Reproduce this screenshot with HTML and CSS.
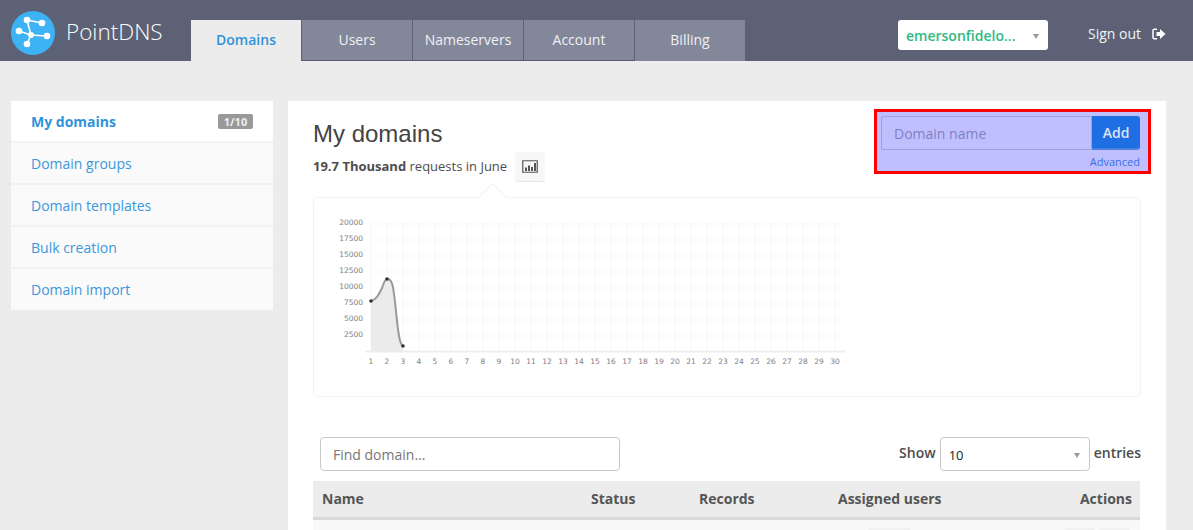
FILE: index.html
```html
<!DOCTYPE html>
<html>
  <head>
    <title>PointDNS</title>
    <meta charset="UTF-8">
    <link rel="stylesheet" href="styles.css">
  </head>
  <body>
    <header class="topbar">
      <a class="logo">
        <svg class="logo-mark" width="44" height="44" viewBox="11 11 44 44">
          <circle cx="33" cy="33" r="22" fill="#3db3f5"/>
          <g stroke="#fff" stroke-width="1.6" fill="none">
            <path d="M27 20 L42 23"/>
            <path d="M27 20 L31 35"/>
            <path d="M19 31 L31 35"/>
            <path d="M31 35 L47 36"/>
            <path d="M31 35 L27 44"/>
          </g>
          <g fill="#fff">
            <circle cx="27" cy="20" r="3.3"/>
            <circle cx="42" cy="23" r="3.3"/>
            <circle cx="19" cy="31" r="3.3"/>
            <circle cx="31" cy="35" r="3"/>
            <circle cx="47" cy="36" r="3.3"/>
            <circle cx="27" cy="44" r="3.3"/>
          </g>
        </svg>
        <span class="logo-text">PointDNS</span>
      </a>
      <nav class="tabs">
        <a class="tab active">Domains</a>
        <a class="tab">Users</a>
        <a class="tab">Nameservers</a>
        <a class="tab">Account</a>
        <a class="tab">Billing</a>
      </nav>
      <div class="account">
        <span class="account-name">emersonfidelo...</span>
        <span class="caret"></span>
      </div>
      <a class="signout">
        Sign out
        <svg width="14" height="12" viewBox="0 0 14 12">
          <path d="M5 1.2 H2.4 Q1 1.2 1 2.6 V9.4 Q1 10.8 2.4 10.8 H5" fill="none" stroke="#fff" stroke-width="1.5"/>
          <path d="M4.5 4 H8 V1 L13.5 6 L8 11 V8 H4.5 Z" fill="#fff"/>
        </svg>
      </a>
    </header>

    <div class="page">
      <aside class="sidebar">
        <a class="side-item current">My domains <span class="badge">1/10</span></a>
        <a class="side-item">Domain groups</a>
        <a class="side-item">Domain templates</a>
        <a class="side-item">Bulk creation</a>
        <a class="side-item">Domain import</a>
      </aside>

      <main class="content">
        <div class="content-head">
          <div>
            <h1>My domains</h1>
            <div class="usage">
              <span class="usage-text"><b>19.7 Thousand</b> requests in June</span>
              <a class="chart-btn">
                <svg width="16" height="13" viewBox="0 0 16 13">
                  <path d="M.75.75 H15.25 V12.25 H.75 Z" fill="none" stroke="#555" stroke-width="1.2"/>
                  <path d="M3 7.5 H5 V11 H3 Z M6 5.5 H8 V11 H6 Z M9 7 H11 V11 H9 Z M12 3 H14 V11 H12 Z" fill="#555"/>
                </svg>
              </a>
            </div>
          </div>
          <form class="add-form">
            <div class="add-row">
              <input class="add-input" placeholder="Domain name">
              <button class="add-btn" type="button">Add</button>
            </div>
            <a class="advanced">Advanced</a>
          </form>
        </div>

        <section class="chart-panel">
          <svg class="chart" width="560" height="170" viewBox="0 0 560 170">
            <defs>
              <pattern id="grid" x="56.5" y="9.5" width="16" height="16" patternUnits="userSpaceOnUse">
                <path d="M16 0 H0 V16" fill="none" stroke="#eeeeee" stroke-width="1"/>
              </pattern>
            </defs>
            <rect x="56" y="9" width="475" height="128" fill="url(#grid)"/>
            <path d="M51 137.5 H531" stroke="#eee" stroke-width="2"/>
            <path class="area" d="M57 87 C63 85 65 80 68 74 C70 68 72 65 73 65 C78 65 79 70 81 88 C84 116 85 130 89 132 L89 137 L57 137 Z"/>
            <path class="line" d="M57 87 C63 85 65 80 68 74 C70 68 72 65 73 65 C78 65 79 70 81 88 C84 116 85 130 89 132"/>
            <circle cx="57" cy="87" r="1.8"/>
            <circle cx="73" cy="65" r="1.8"/>
            <circle cx="89" cy="132" r="1.8"/>
            <g class="y-labels">
              <text x="49" y="11">20000</text>
              <text x="49" y="27">17500</text>
              <text x="49" y="43">15000</text>
              <text x="49" y="59">12500</text>
              <text x="49" y="75">10000</text>
              <text x="49" y="91">7500</text>
              <text x="49" y="107">5000</text>
              <text x="49" y="123">2500</text>
            </g>
            <g class="x-labels">
              <text x="57" y="150">1</text>
              <text x="73" y="150">2</text>
              <text x="89" y="150">3</text>
              <text x="105" y="150">4</text>
              <text x="121" y="150">5</text>
              <text x="137" y="150">6</text>
              <text x="153" y="150">7</text>
              <text x="169" y="150">8</text>
              <text x="185" y="150">9</text>
              <text x="201" y="150">10</text>
              <text x="217" y="150">11</text>
              <text x="233" y="150">12</text>
              <text x="249" y="150">13</text>
              <text x="265" y="150">14</text>
              <text x="281" y="150">15</text>
              <text x="297" y="150">16</text>
              <text x="313" y="150">17</text>
              <text x="329" y="150">18</text>
              <text x="345" y="150">19</text>
              <text x="361" y="150">20</text>
              <text x="377" y="150">21</text>
              <text x="393" y="150">22</text>
              <text x="409" y="150">23</text>
              <text x="425" y="150">24</text>
              <text x="441" y="150">25</text>
              <text x="457" y="150">26</text>
              <text x="473" y="150">27</text>
              <text x="489" y="150">28</text>
              <text x="505" y="150">29</text>
              <text x="521" y="150">30</text>
            </g>
          </svg>
        </section>

        <div class="table-tools">
          <input class="find-input" placeholder="Find domain...">
          <div class="show">
            <span>Show</span>
            <div class="show-select"><span class="show-value">10</span> <span class="caret"></span></div>
            <span>entries</span>
          </div>
        </div>

        <table class="domains">
          <thead>
            <tr>
              <th class="col-name">Name</th>
              <th class="col-status">Status</th>
              <th class="col-records">Records</th>
              <th class="col-users">Assigned users</th>
              <th class="col-actions">Actions</th>
            </tr>
          </thead>
          <tbody>
            <tr>
              <td></td>
              <td></td>
              <td></td>
              <td><span class="pill pill-users"></span></td>
              <td class="col-actions"><span class="pill"></span><span class="pill"></span></td>
            </tr>
          </tbody>
        </table>
      </main>
    </div>
  </body>
</html>
```

FILE: styles.css
```css
html {
  height: 100%;
  background: #ececec;
}
body {
  margin: 0;
  height: 100%;
  overflow: hidden;
  font-family: "Open Sans", sans-serif;
  font-size: 14px;
  color: #4d4d4d;
}
.topbar {
  height: 61px;
  background: #5c6175;
  display: flex;
  align-items: flex-start;
  color: white;
}
.logo {
  width: 191px;
  height: 61px;
  display: flex;
  align-items: center;
  padding-left: 11px;
  padding-top: 4px;
  box-sizing: border-box;
}
.logo-mark {
  flex: none;
}
.logo-text {
  font-size: 22.5px;
  font-weight: 300;
  margin-left: 11px;
  margin-bottom: 3px;
  color: #fff;
}
.tabs {
  display: flex;
  align-self: flex-end;
  gap: 1px;
}
.tab {
  width: 110px;
  height: 40px;
  line-height: 39px;
  text-align: center;
  background: #82879a;
  color: #f1f1f4;
  border-bottom: 1px solid #555a6e;
}
.tab.active {
  background: #ececec;
  color: #2f93d9;
  font-weight: 600;
  border-bottom: 1px solid #ececec;
}
.tab:last-child {
  border-bottom-color: #82879a;
}
.account {
  margin: 20px 0 0 153px;
  width: 150px;
  height: 30px;
  background: white;
  border-radius: 3px;
  display: flex;
  align-items: center;
  justify-content: space-between;
  padding: 0 9px 0 8px;
  box-sizing: border-box;
  color: #2dbb7f;
  font-weight: 600;
}
.caret {
  display: inline-block;
  border-top: 5px solid #999;
  border-left: 3.5px solid transparent;
  border-right: 3.5px solid transparent;
  margin-top: 3px;
}
.signout {
  margin: 24px 0 0 40px;
  display: flex;
  align-items: center;
  gap: 11px;
  color: #f4f4f6;
}
.page {
  display: flex;
  align-items: flex-start;
  padding: 40px 27px 0 11px;
  gap: 15px;
}
.sidebar {
  width: 262px;
  flex: none;
  background: #fafafa;
}
.side-item {
  display: flex;
  justify-content: space-between;
  align-items: center;
  height: 40px;
  padding: 0 20px;
  color: #3a97dc;
  border-bottom: 2px solid #f2f2f2;
}
.side-item:last-child {
  border-bottom: 1px solid #fafafa;
}
.side-item.current {
  background: white;
  color: #2f93d9;
  font-weight: 700;
}
.badge {
  background: #999;
  color: #eee;
  font-size: 11px;
  font-weight: 700;
  line-height: 15px;
  width: 35px;
  text-align: center;
  border-radius: 2px;
}
.content {
  flex: 1;
  height: 500px;
  background: white;
  padding: 0 25px;
  box-sizing: border-box;
}
.content-head {
  display: flex;
  justify-content: space-between;
  align-items: flex-start;
}
h1 {
  font-family: "Liberation Sans", sans-serif;
  font-size: 24px;
  font-weight: 400;
  line-height: 28px;
  margin: 19px 0 0;
  color: #444;
}
.usage {
  display: flex;
  align-items: center;
  gap: 8px;
  font-size: 13px;
  margin-top: 4px;
}
.usage-text {
  margin-top: -2px;
}
.chart-btn {
  width: 30px;
  height: 29px;
  background: #f7f7f7;
  border-bottom: 1px solid #e4e4e4;
  border-radius: 3px;
  display: flex;
  align-items: center;
  justify-content: center;
}
.add-form {
  margin: 8px -10px 0 0;
  width: 277px;
  height: 65px;
  box-sizing: border-box;
  border: 3px solid #f00;
  background: #bfbffd;
  padding: 4px 8px 0 4px;
  text-align: right;
}
.add-row {
  display: flex;
  height: 34px;
}
.add-input {
  flex: 1;
  min-width: 0;
  box-sizing: border-box;
  border: 1px solid #9f9fdc;
  background: #bfbffd;
  padding: 0 12px;
  font: 14px "Open Sans", sans-serif;
  border-radius: 2px 0 0 2px;
}
.add-input::placeholder {
  color: #7f7fc4;
}
.add-btn {
  width: 48px;
  border: 0;
  border-bottom: 2px solid #4d7fe0;
  border-radius: 0 3px 3px 0;
  background: #1e6fe3;
  color: #dfe3fb;
  font: 600 14px "Open Sans", sans-serif;
  padding: 0;
}
.advanced {
  display: block;
  font-size: 11px;
  line-height: 15px;
  margin-top: 4px;
  color: #3a6fe8;
}
.chart-panel {
  position: relative;
  margin-top: 15px;
  height: 200px;
  box-sizing: border-box;
  border: 1px solid #f3f3f3;
  border-radius: 5px;
  width: 828px;
}
/* notch under the chart button */
.chart-panel::before {
  content: "";
  position: absolute;
  top: -11px;
  left: 168px;
  width: 20px;
  height: 20px;
  background: white;
  border-top: 1px solid #f0f0f0;
  border-left: 1px solid #f0f0f0;
  transform: rotate(45deg);
}
.chart {
  display: block;
  position: relative;
  margin: 16px 0 0 0;
}
.chart text {
  font-family: "DejaVu Sans", sans-serif;
  font-size: 7.5px;
  fill: #808080;
}
.y-labels text {
  text-anchor: end;
}
.x-labels text {
  text-anchor: middle;
}
.chart circle {
  fill: #333;
}
.area {
  fill: #ebebeb;
}
.line {
  fill: none;
  stroke: #999;
  stroke-width: 2;
}
.table-tools {
  display: flex;
  justify-content: space-between;
  align-items: center;
  margin: 40px 0 10px;
  padding-left: 7px;
  width: 828px;
  box-sizing: border-box;
}
.find-input {
  width: 300px;
  height: 34px;
  box-sizing: border-box;
  border: 1px solid #c9c9c9;
  border-radius: 4px;
  padding: 0 12px;
  font: 14px "Open Sans", sans-serif;
}
.find-input::placeholder {
  color: #777;
}
.show {
  display: flex;
  align-items: center;
  gap: 4px;
  font-weight: 600;
}
.show > span {
  margin-top: -4px;
}
.show-select {
  width: 150px;
  height: 34px;
  box-sizing: border-box;
  border: 1px solid #c9c9c9;
  border-radius: 4px;
  padding: 0 9px 0 8px;
  display: flex;
  align-items: center;
  justify-content: space-between;
}
.show-value {
  font-size: 13px;
  font-weight: 400;
  color: #222;
  padding-top: 2px;
}
.domains {
  width: 827px;
  border-collapse: separate;
  border-spacing: 0;
  table-layout: fixed;
}
.domains th {
  height: 39px;
  padding: 0 8px 2px 9px;
  box-sizing: border-box;
  background: #ececec;
  border-bottom: 3px solid #d9d9d9;
  text-align: left;
  font-weight: 700;
  color: #555;
}
.domains td {
  height: 40px;
  padding: 8px 10px 8px 9px;
  box-sizing: border-box;
  background: #f9f9f9;
  vertical-align: top;
}
.col-name {
  width: 269px;
}
.col-status {
  width: 108px;
}
.col-records {
  width: 139px;
}
.col-users {
  width: 170px;
}
.domains .col-actions {
  text-align: right;
}
.pill {
  display: inline-block;
  width: 31px;
  height: 24px;
  background: #f1f1f1;
  border-radius: 3px;
  margin-left: 4px;
}
.pill-users {
  width: 43px;
  margin-left: 30px;
}
```
